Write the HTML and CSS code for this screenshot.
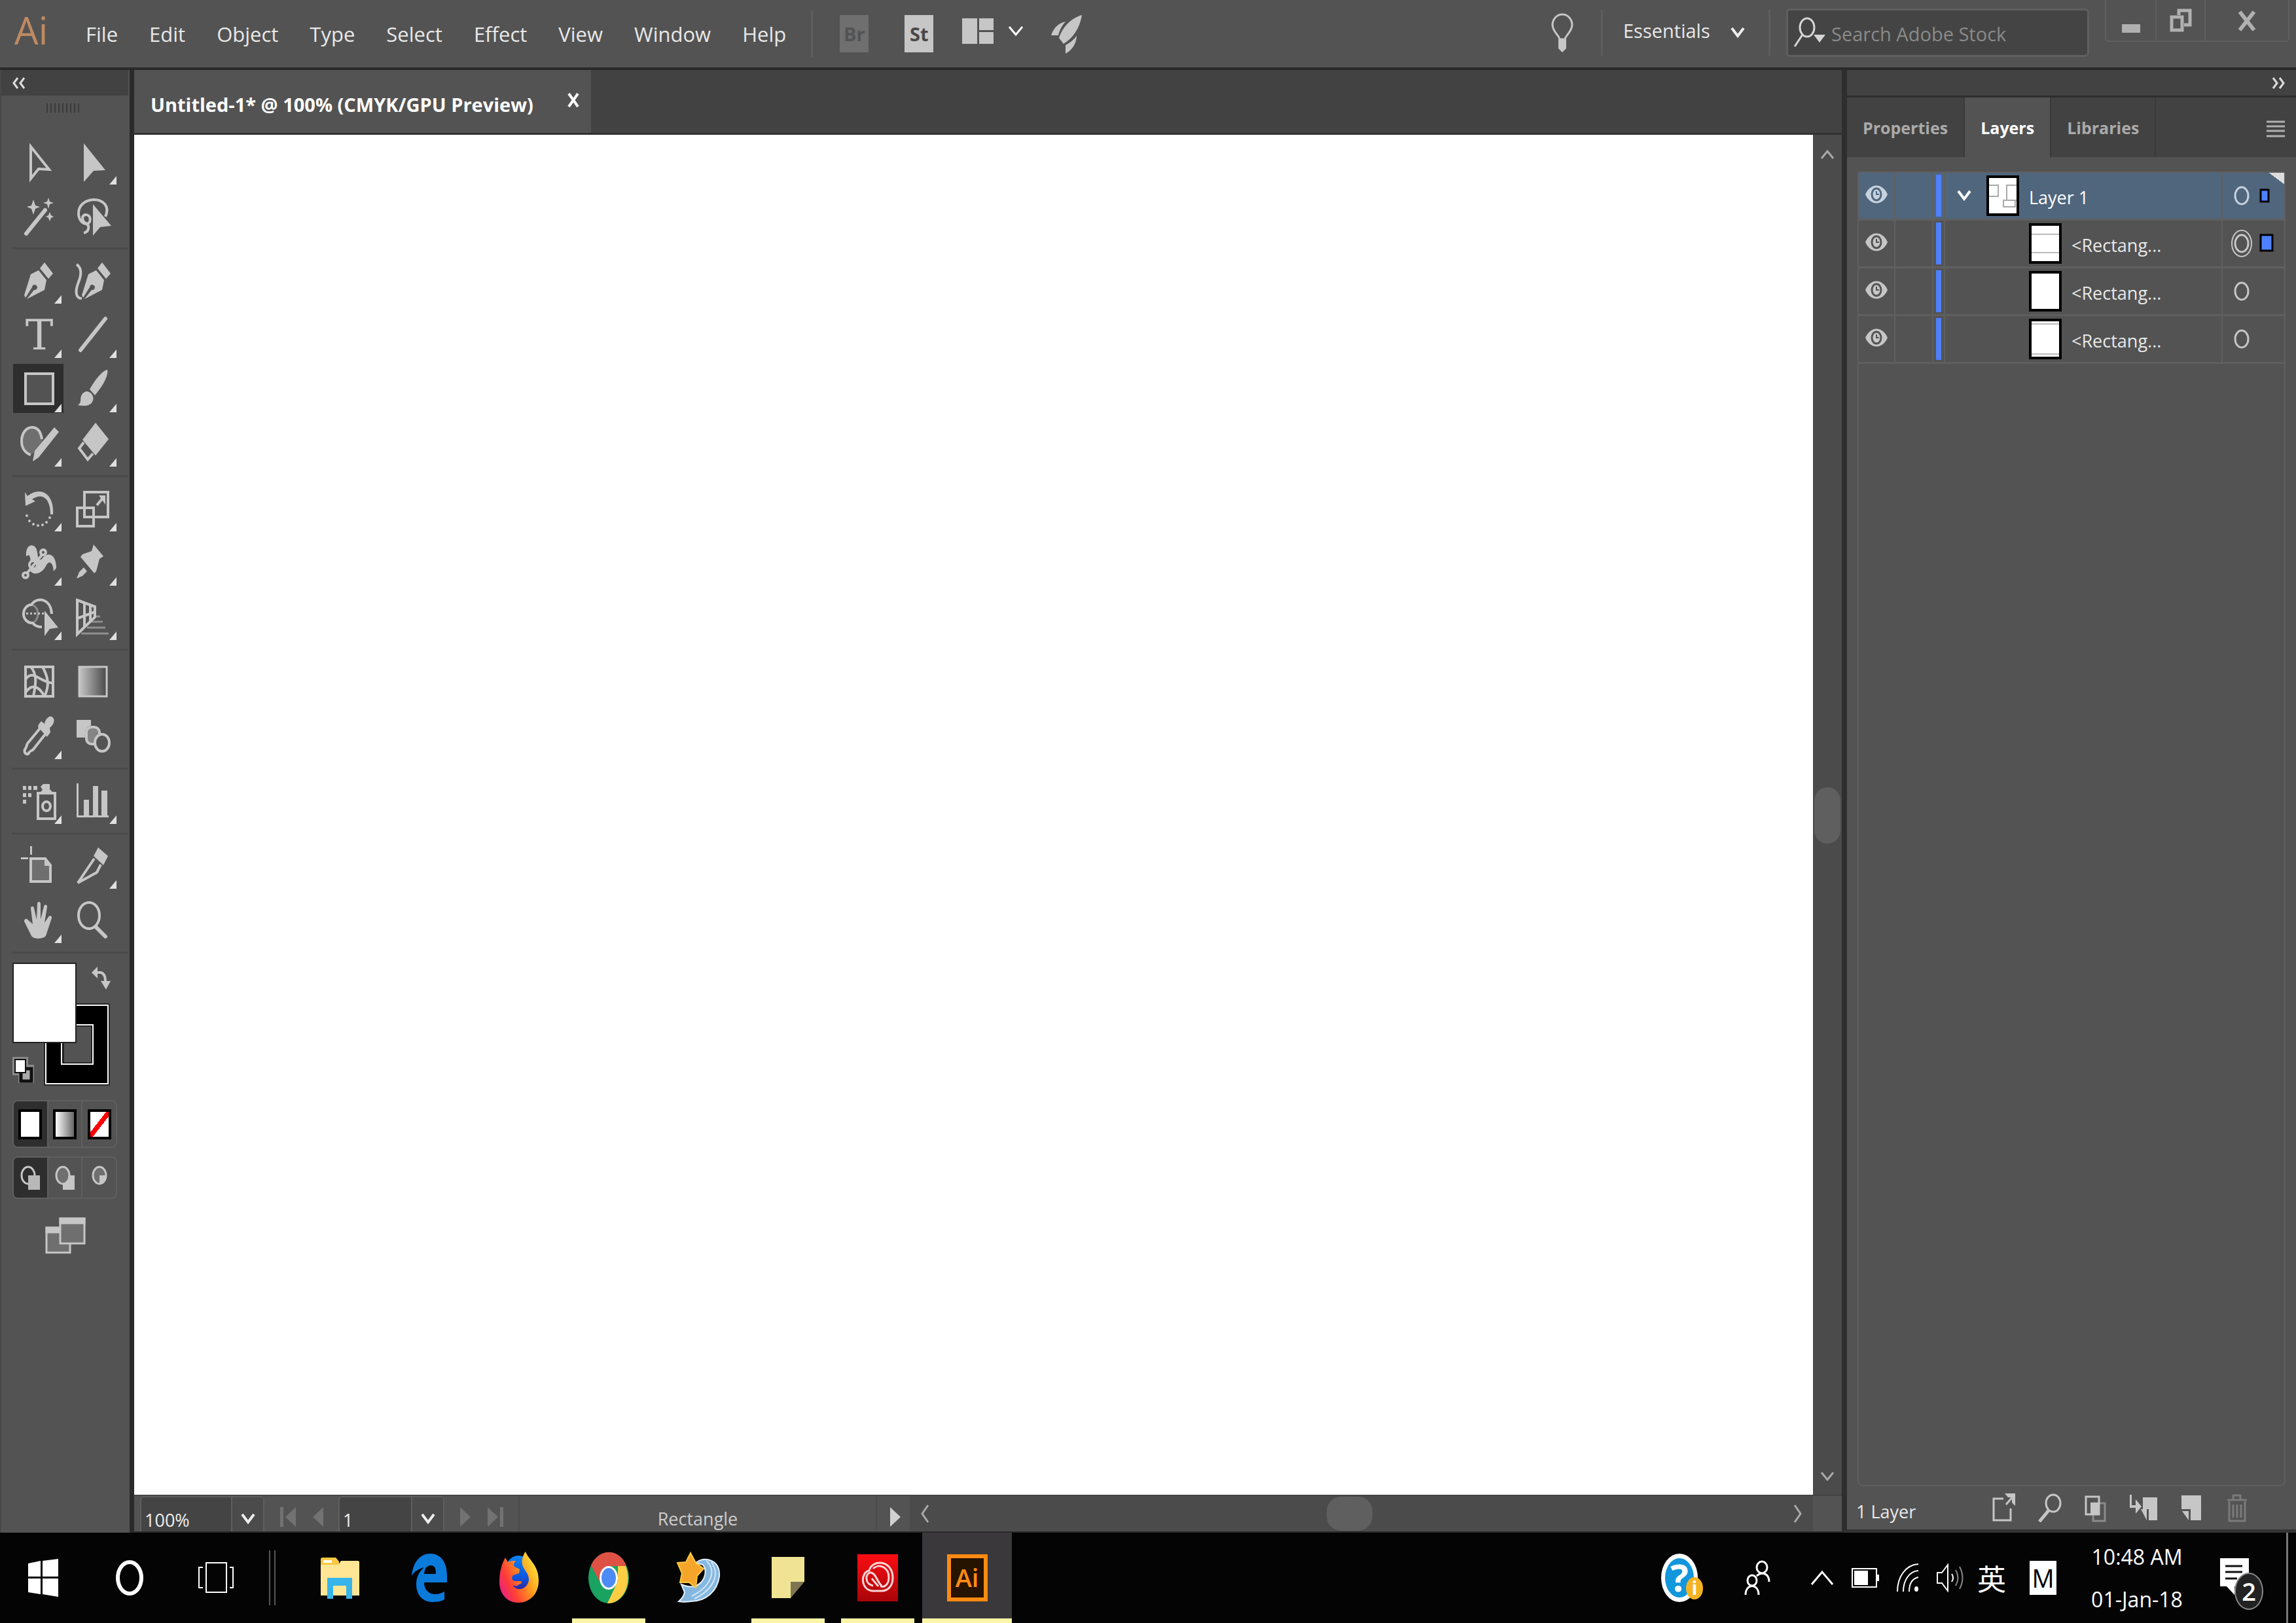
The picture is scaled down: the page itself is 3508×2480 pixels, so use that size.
FILE: index.html
```
<!DOCTYPE html>
<html lang="en">
<head>
    <meta charset="UTF-8">
    <meta name="viewport" content="width=device-width, initial-scale=1.0">
    <title>Untitled-1</title>
    <link rel="stylesheet" href="styles.css">
</head>
<body>
    <!-- Menu bar -->
    <header class="menubar">
        <span class="app-logo">Ai</span>
        <nav class="menus">
            <button>File</button>
            <button>Edit</button>
            <button>Object</button>
            <button>Type</button>
            <button>Select</button>
            <button>Effect</button>
            <button>View</button>
            <button>Window</button>
            <button>Help</button>
        </nav>
        <span class="divider"></span>
        <div class="app-links">
            <button class="app-tile dim">Br</button>
            <button class="app-tile">St</button>
            <button class="arrange" aria-label="Arrange documents">
                <svg width="94" height="40" viewBox="0 0 94 40"><path fill="#c6c6c6" d="M0 0h23v39H0zM26 0h22v18H26zM26 21h22v18H26z"/><path d="M72 13l10 12 10-12" fill="none" stroke="#fff" stroke-width="3"/></svg>
            </button>
            <button aria-label="GPU performance">
                <svg width="48" height="60" viewBox="0 0 48 60" fill="#c6c6c6"><path d="M47 1C32 5 18 18 12 36l7 9C34 36 44 20 47 1zM22 11C12 13 4 20 0 32h11c2-8 5-14 11-21zM39 32c-3 6-9 10-17 15v13c10-5 17-16 17-28z"/></svg>
            </button>
        </div>
        <div class="menubar-right">
            <button aria-label="Learn">
                <svg width="40" height="60" viewBox="0 0 40 60" fill="none" stroke="#c6c6c6" stroke-width="3"><path d="M16 40C15 34 5 28 5 18a15 16 0 0 1 30 0c0 10-10 16-11 22z"/><path fill="#c6c6c6" stroke="none" d="M14 40h12v14l-6 6-6-6z"/></svg>
            </button>
            <span class="divider"></span>
            <label class="workspace">
                <select aria-label="Workspace"><option>Essentials</option></select>
                <svg width="22" height="18" viewBox="0 0 22 18"><path d="M2 2l9 12 9-12" fill="none" stroke="#eee" stroke-width="4"/></svg>
            </label>
            <span class="divider"></span>
            <label class="search">
                <svg width="50" height="48" viewBox="0 0 50 48"><g fill="none" stroke="#d6d6d6" stroke-width="3"><ellipse cx="21" cy="16" rx="11" ry="14"/><path d="M14 27L2 45"/></g><path fill="#d6d6d6" d="M31 27h18l-9 12z"/></svg>
                <input type="text" placeholder="Search Adobe Stock" aria-label="Search Adobe Stock">
            </label>
            <div class="window-buttons">
                <button aria-label="Minimize"><svg width="30" height="40" viewBox="0 0 30 40"><path fill="#b0b0b0" d="M1 26h28v13H1z"/></svg></button>
                <button aria-label="Restore"><svg width="34" height="40" viewBox="0 0 34 40" fill="none" stroke="#b0b0b0" stroke-width="5"><path d="M14 12V5h17v22h-9"/><path d="M3 15h16v20H3z"/></svg></button>
                <button aria-label="Close"><svg width="30" height="40" viewBox="0 0 30 40"><path d="M4 7l22 28M26 7L4 35" stroke="#b0b0b0" stroke-width="6"/></svg></button>
            </div>
        </div>
    </header>

    <main class="workspace-area">
        <!-- Tools panel -->
        <aside class="tools">
            <div class="panel-header"><svg width="22" height="18" viewBox="0 0 22 18"><path d="M9 1L3 9l6 8M19 1l-6 8 6 8" fill="none" stroke="#ddd" stroke-width="3"/></svg></div>
            <div class="grip"></div>

            <div class="tool-group">
                <button class="tool" aria-label="Selection"><svg viewBox="0 0 84 83"><path class="line" d="M29 17v49l12-15 16 1z"/></svg></button>
                <button class="tool more" aria-label="Direct selection"><svg viewBox="0 0 84 83"><path d="M26 12v59l15-17 18-1z"/></svg></button>
                <button class="tool" aria-label="Magic wand"><svg viewBox="0 0 84 83"><path class="line thick" d="M22 67L51 31"/><path d="M33 15l3 9 7 2-7 3-3 9-3-9-7-3 7-2zM56 12l2 6 6 2-6 2-2 7-2-7-6-2 6-2zM58 34l2 5 4 2-4 2-2 5-2-5-4-2 4-2z"/></svg></button>
                <button class="tool" aria-label="Lasso"><svg viewBox="0 0 84 83"><path class="line" d="M59 41C67 23 53 15 41 15 26 16 18 25 18 36c0 9 6 17 13 16 7-2 6-14-2-14-7 1-6 10 0 13 7 4 5 13-3 15"/><path d="M40 22v48l11-13 17-2z"/></svg></button>
            </div>

            <div class="tool-group">
                <button class="tool more" aria-label="Pen"><svg viewBox="0 0 84 83"><path d="M19 62L29 30l12-6 12 15-3 15-27 14 11-14a4 4 0 1 0-3-4L21 66zM50 12l13 17-7 8-13-16z"/></svg></button>
                <button class="tool" aria-label="Curvature"><svg viewBox="0 0 84 83"><path d="M23 62L33 30l12-6 12 15-3 15-27 14 11-14a4 4 0 1 0-3-4L25 66zM54 12l13 17-7 8-13-16z"/><path class="line" d="M15 15c9 6 7 17 3 27-6 15-4 25 5 25"/></svg></button>
                <button class="tool more" aria-label="Type"><svg viewBox="0 0 84 83"><text class="type-glyph" x="42" y="62" text-anchor="middle">T</text></svg></button>
                <button class="tool more" aria-label="Line segment"><svg viewBox="0 0 84 83"><path class="line thick" d="M21 63l38-48"/></svg></button>
                <button class="tool more active" aria-label="Rectangle"><svg viewBox="0 0 84 83"><path class="line" fill="#535353" d="M21 16h42v46H21z"/></svg></button>
                <button class="tool more" aria-label="Paintbrush"><svg viewBox="0 0 84 83"><path d="M62 10c2 8-6 24-19 39l-8-9c9-16 20-29 27-30zM31 43c7 1 11 8 9 14-3 9-14 9-23 7 6-4 3-8 5-14 2-4 5-7 9-7z"/></svg></button>
                <button class="tool more" aria-label="Shaper"><svg viewBox="0 0 84 83"><ellipse cx="31" cy="36" rx="16" ry="19" fill="#6f6f6f"/><path class="line" d="M46 33C44 20 38 15 31 15c-9 0-16 9-16 21 0 10 5 18 14 21"/><path d="M32 67l3-16 30-36 7 7-31 39z"/></svg></button>
                <button class="tool more" aria-label="Eraser"><svg viewBox="0 0 84 83"><path d="M44 8l20 25-20 25-20-24z"/><path class="line" d="M26 38l-7 9 13 17 8-9"/></svg></button>
            </div>

            <div class="tool-group">
                <button class="tool more" aria-label="Rotate"><svg viewBox="0 0 84 83"><path d="M20 15l4 6C42 6 65 15 63 49h-4C59 24 46 15 31 26l5 3-15 7z"/><g><circle cx="23" cy="51" r="2"/><circle cx="27" cy="59" r="2"/><circle cx="33" cy="64" r="2"/><circle cx="40" cy="66" r="2"/><circle cx="47" cy="65" r="2"/><circle cx="53" cy="61" r="2"/><circle cx="58" cy="54" r="2"/></g></svg></button>
                <button class="tool more" aria-label="Scale"><svg viewBox="0 0 84 83"><path class="line" d="M27 15h36v38H27zM16 39h25v28H16zM46 35l9-11"/><path d="M49 20h10v14z"/></svg></button>
                <button class="tool more" aria-label="Width"><svg viewBox="0 0 84 83"><path d="M22 30c-2-20 15-22 17-6 1 8 2 14 7 10 8-12 22-8 22 14l-4 5c-1-14-7-18-12-8-6 12-19 15-24 7 0-8 2-20-2-24z"/><g class="line"><circle cx="33" cy="43" r="6" fill="#535353"/><path d="M24 55l22-27"/><circle cx="48" cy="24" r="4" fill="#535353"/><circle cx="21" cy="59" r="4" fill="#535353"/></g></svg></button>
                <button class="tool more" aria-label="Puppet warp"><svg viewBox="0 0 84 83"><path d="M41 12l15 18-6 4-5 19-3 3-21-25 3-4 14-5z"/><path d="M15 64l4-10 7-7 5 6-7 7z"/></svg></button>
                <button class="tool more" aria-label="Shape builder"><svg viewBox="0 0 84 83"><ellipse cx="29" cy="35" rx="11" ry="14" fill="none" stroke="#8a8a8a" stroke-width="3"/><path class="line" d="M46 55c-7 0-11-2-14-6-8 0-14-6-14-14s6-14 12-14c10-14 30-8 31 14"/><path d="M22 33h3v3h-3zM28 33h3v3h-3zM34 33h3v3h-3zM40 33h3v3h-3zM46 33h3v3h-3zM50 30v39l8-11 13-2z"/></svg></button>
                <button class="tool more" aria-label="Perspective grid"><svg viewBox="0 0 84 83"><path d="M44 39h7M37 47h18M31 56h28M22 65h42" stroke="#8f8f8f" stroke-width="3"/><path class="line" d="M16 14l27 10v16L16 66zM27 18v37M36 22v25M16 42l27-10"/></svg></button>
            </div>

            <div class="tool-group">
                <button class="tool" aria-label="Mesh"><svg viewBox="0 0 84 83"><path class="line" d="M21 17h42v45H21zM21 36c12-16 20 4 42 6M21 56c10-14 20-10 29 6M29 17c11 12 7 30 4 45M47 17c10 18 10 30 3 45"/></svg></button>
                <button class="tool" aria-label="Gradient"><svg viewBox="0 0 84 83"><defs><linearGradient id="fade"><stop offset="0" stop-color="#c6c6c6"/><stop offset="1" stop-color="#484848"/></linearGradient></defs><path d="M19 17h42v45H19z" fill="url(#fade)" stroke="#c6c6c6" stroke-width="3"/></svg></button>
                <button class="tool more" aria-label="Eyedropper"><svg viewBox="0 0 84 83"><path d="M41 22l4-5 5 4c2-8 6-12 11-11 6 3 4 12-3 17l1 7-5 7-14-15z"/><path class="line" d="M43 28L24 51c-2 4-1 6-4 9-2 6 3 9 6 6 1-4 4-3 7-6l18-23"/></svg></button>
                <button class="tool" aria-label="Blend"><svg viewBox="0 0 84 83"><path d="M15 15h22v9c-7 1-10 7-9 18H15z"/><rect class="line" x="30" y="26" width="20" height="26" rx="8" fill="#858585"/><ellipse class="line" cx="54" cy="50" rx="11" ry="13" fill="#535353"/></svg></button>
            </div>

            <div class="tool-group">
                <button class="tool more" aria-label="Symbol sprayer"><svg viewBox="0 0 84 83"><path d="M17 17h5v6h-5zM25 17h5v6h-5zM33 17h6v6h-6zM17 28h5v6h-5zM25 28h5v6h-5zM17 38h5v6h-5zM44 18l4-4h10v8l5 5H43l4-4z"/><path class="line" d="M40 28h26v39H40z"/><ellipse class="line" cx="53" cy="48" rx="6" ry="7"/></svg></button>
                <button class="tool more" aria-label="Column graph"><svg viewBox="0 0 84 83"><path d="M15 13h3v49h46v3H15zM26 38h8v25h-8zM40 17h8v46h-8zM53 24h9v39h-9z"/></svg></button>
            </div>

            <div class="tool-group">
                <button class="tool" aria-label="Artboard"><svg viewBox="0 0 84 83"><path class="line" fill="#6f6f6f" d="M29 29h22l8 10v25H29z"/><path d="M50 28l10 12H50zM28 10h3v13h-3zM14 27h11v3H14z"/></svg></button>
                <button class="tool more" aria-label="Slice"><svg viewBox="0 0 84 83"><path d="M48 12l15 13-7 14-15-14z"/><path class="line" d="M42 29L17 66l29-16 6-12"/></svg></button>
                <button class="tool more" aria-label="Hand"><svg viewBox="0 0 84 83"><path d="M30 64L19 42c0-4 3-5 5-3l8 7-3-24c0-4 5-4 5 0l4 17 1-24c0-4 5-4 5 0v24l5-20c1-4 6-3 5 1l-4 24 6-9c2-3 6-1 5 2L52 64c-4 5-18 6-22 0z"/></svg></button>
                <button class="tool" aria-label="Zoom"><svg viewBox="0 0 84 83"><ellipse class="line" cx="34" cy="33" rx="16" ry="20"/><path class="line thick" d="M44 50l15 15"/></svg></button>
            </div>

            <div class="swatches">
                <svg width="160" height="190" viewBox="0 0 160 190">
                    <path d="M51 65h95v120H51zM76 95v60h47V95z" fill="#000" fill-rule="evenodd" stroke="#111" stroke-width="5"/>
                    <path d="M51 65h95v120H51zM75 95v60h48V95z" fill="#000" fill-rule="evenodd" stroke="#fff" stroke-width="2"/>
                    <path d="M1 1h96v121H1z" fill="#fff" stroke="#222" stroke-width="2"/>
                    <path d="M129 15h6q7 2 7 13" fill="none" stroke="#c6c6c6" stroke-width="4"/>
                    <path fill="#c6c6c6" d="M121 15l9-9v18zM135 28h15l-7 13z"/>
                    <path d="M0 144h24v12h9v28H9v-12H0z" fill="#8a8a8a"/>
                    <path d="M13 162h16v19H13z" fill="#aaa" stroke="#111" stroke-width="5"/>
                    <path d="M4 148h16v20H4z" fill="#fff" stroke="#111" stroke-width="2"/>
                </svg>
            </div>

            <div class="switch tall">
                <button class="on" aria-label="Color"><span class="chip"></span></button>
                <button aria-label="Gradient fill"><span class="chip chip-gradient"></span></button>
                <button aria-label="None"><span class="chip chip-none"></span></button>
            </div>
            <div class="switch">
                <button class="on" aria-label="Draw normal"><svg width="30" height="38" viewBox="0 0 30 38"><ellipse cx="12" cy="15" rx="10" ry="13" fill="none" stroke="#c6c6c6" stroke-width="3"/><path fill="#b8b8b8" d="M12 15h18v22H12z"/></svg></button>
                <button aria-label="Draw behind"><svg width="30" height="38" viewBox="0 0 30 38"><path fill="#c6c6c6" d="M12 15h18v22H12z"/><ellipse cx="12" cy="15" rx="10" ry="13" fill="#6f6f6f" stroke="#c6c6c6" stroke-width="3"/></svg></button>
                <button aria-label="Draw inside"><svg width="30" height="38" viewBox="0 0 30 38"><ellipse cx="15" cy="15" rx="10" ry="13" fill="#6f6f6f" stroke="#c6c6c6" stroke-width="3"/><path fill="#c6c6c6" d="M15 15h11q-1 11-11 13z"/></svg></button>
            </div>
            <button class="screen-mode" aria-label="Change screen mode"><svg width="62" height="58" viewBox="0 0 62 58" stroke="#c6c6c6" stroke-width="3"><path fill="#6f6f6f" d="M2 17h36v38H2z"/><path fill="#c6c6c6" d="M2 17h20v7H2z"/><path fill="#6f6f6f" d="M23 3h37v38H23z"/><path fill="#c6c6c6" d="M23 3h37v7H23z"/></svg></button>
        </aside>

        <!-- Document window -->
        <section class="document">
            <div class="doc-tabs">
                <div class="doc-tab">
                    <span>Untitled-1* @ 100% (CMYK/GPU Preview)</span>
                    <button aria-label="Close tab"><svg width="18" height="22" viewBox="0 0 18 22"><path d="M2 1l14 20M16 1L2 21" stroke="#fff" stroke-width="4"/></svg></button>
                </div>
            </div>
            <div class="canvas-row">
                <div class="canvas"></div>
                <div class="scroll-v">
                    <svg width="22" height="16" viewBox="0 0 22 16"><path d="M2 14L11 3l9 11" fill="none" stroke="#aaa" stroke-width="3"/></svg>
                    <span class="thumb"></span>
                    <svg width="22" height="16" viewBox="0 0 22 16"><path d="M2 2l9 11 9-11" fill="none" stroke="#aaa" stroke-width="3"/></svg>
                </div>
            </div>
            <div class="status">
                <label class="combo zoom-level">
                    <select aria-label="Zoom level"><option>100%</option></select>
                    <span><svg width="22" height="18" viewBox="0 0 22 18"><path d="M2 2l9 12 9-12" fill="none" stroke="#eee" stroke-width="4"/></svg></span>
                </label>
                <div class="pager">
                    <button disabled aria-label="First artboard"><svg width="24" height="30" viewBox="0 0 24 30"><path d="M0 0h5v30H0zM24 0v30L8 15z"/></svg></button>
                    <button disabled aria-label="Previous artboard"><svg width="16" height="30" viewBox="0 0 16 30"><path d="M16 0v30L0 15z"/></svg></button>
                </div>
                <label class="combo page">
                    <select aria-label="Artboard"><option>1</option></select>
                    <span><svg width="22" height="18" viewBox="0 0 22 18"><path d="M2 2l9 12 9-12" fill="none" stroke="#eee" stroke-width="4"/></svg></span>
                </label>
                <div class="pager">
                    <button disabled aria-label="Next artboard"><svg width="16" height="30" viewBox="0 0 16 30"><path d="M0 0v30l16-15z"/></svg></button>
                    <button disabled aria-label="Last artboard"><svg width="24" height="30" viewBox="0 0 24 30"><path d="M24 0h-5v30h5zM0 0v30l16-15z"/></svg></button>
                </div>
                <span class="current-tool">Rectangle</span>
                <button class="status-menu" aria-label="Status options"><svg width="16" height="30" viewBox="0 0 16 30"><path fill="#d0d0d0" d="M0 0v30l16-15z"/></svg></button>
                <div class="scroll-h">
                    <svg width="14" height="30" viewBox="0 0 14 30"><path d="M12 2L3 15l9 13" fill="none" stroke="#aaa" stroke-width="3"/></svg>
                    <span class="thumb"></span>
                    <svg width="14" height="30" viewBox="0 0 14 30"><path d="M2 2l9 13-9 13" fill="none" stroke="#aaa" stroke-width="3"/></svg>
                </div>
                <span class="corner"></span>
            </div>
        </section>

        <!-- Layers panel -->
        <aside class="panels">
            <div class="panel-header right"><svg width="22" height="18" viewBox="0 0 22 18"><path d="M3 1l6 8-6 8M13 1l6 8-6 8" fill="none" stroke="#ddd" stroke-width="3"/></svg></div>
            <div class="panel-tabs">
                <button>Properties</button>
                <button class="current">Layers</button>
                <button>Libraries</button>
                <button class="panel-menu" aria-label="Panel menu"><svg width="28" height="28" viewBox="0 0 28 28"><path d="M0 3h28M0 10h28M0 17h28M0 25h28" stroke="#b0b0b0" stroke-width="3"/></svg></button>
            </div>
            <ul class="layers">
                <li class="layer selected">
                    <button class="eye" aria-label="Toggle visibility"><svg width="34" height="28" viewBox="0 0 34 28"><path fill="#c6d2de" d="M0 14C8-4 26-4 34 14 26 32 8 32 0 14z"/><ellipse cx="17" cy="14" rx="7" ry="9" fill="none" stroke="#50667d" stroke-width="3"/><path d="M17 9v5h4" fill="none" stroke="#50667d" stroke-width="2"/></svg></button>
                    <span class="lock"></span>
                    <span class="bar"></span>
                    <div class="layer-name">
                        <svg class="twist" width="22" height="18" viewBox="0 0 22 18"><path d="M2 2l9 12 9-12" fill="none" stroke="#fff" stroke-width="4"/></svg>
                        <svg width="50" height="62" viewBox="0 0 50 62"><path fill="#fff" stroke="#000" stroke-width="4" d="M2 2h46v58H2z"/><path fill="none" stroke="#aaa" stroke-width="2" d="M4 15h14v17H4M46 15H31v23h15M26 38h18v10H26z"/></svg>
                        <span>Layer 1</span>
                    </div>
                    <span class="target"><svg width="90" height="44" viewBox="-4 0 90 44"><ellipse cx="25" cy="22" rx="10" ry="13" fill="none" stroke="#c6d2de" stroke-width="3"/><path fill="#4f80ff" stroke="#000" stroke-width="3" d="M54 13h12v18H54z"/></svg></span>
                </li>
                <li class="layer child">
                    <button class="eye" aria-label="Toggle visibility"><svg width="34" height="28" viewBox="0 0 34 28"><path fill="#c6c6c6" d="M0 14C8-4 26-4 34 14 26 32 8 32 0 14z"/><ellipse cx="17" cy="14" rx="7" ry="9" fill="none" stroke="#535353" stroke-width="3"/><path d="M17 9v5h4" fill="none" stroke="#535353" stroke-width="2"/></svg></button>
                    <span class="lock"></span>
                    <span class="bar"></span>
                    <div class="layer-name">
                        <svg width="50" height="62" viewBox="0 0 50 62"><path fill="#fff" stroke="#000" stroke-width="4" d="M2 2h46v58H2z"/><path stroke="#bbb" stroke-width="2" d="M4 17h42M4 45h42"/></svg>
                        <span>&lt;Rectang...</span>
                    </div>
                    <span class="target"><svg width="90" height="44" viewBox="-4 0 90 44"><g fill="none" stroke="#c6c6c6" stroke-width="3"><ellipse cx="25" cy="22" rx="10" ry="13"/><ellipse cx="25" cy="22" rx="15" ry="20" stroke-width="2"/></g><path fill="#4f80ff" stroke="#000" stroke-width="3" d="M54 9h18v24H54z"/></svg></span>
                </li>
                <li class="layer child">
                    <button class="eye" aria-label="Toggle visibility"><svg width="34" height="28" viewBox="0 0 34 28"><path fill="#c6c6c6" d="M0 14C8-4 26-4 34 14 26 32 8 32 0 14z"/><ellipse cx="17" cy="14" rx="7" ry="9" fill="none" stroke="#535353" stroke-width="3"/><path d="M17 9v5h4" fill="none" stroke="#535353" stroke-width="2"/></svg></button>
                    <span class="lock"></span>
                    <span class="bar"></span>
                    <div class="layer-name">
                        <svg width="50" height="62" viewBox="0 0 50 62"><path fill="#fff" stroke="#000" stroke-width="4" d="M2 2h46v58H2z"/></svg>
                        <span>&lt;Rectang...</span>
                    </div>
                    <span class="target"><svg width="90" height="44" viewBox="-4 0 90 44"><ellipse cx="25" cy="22" rx="10" ry="13" fill="none" stroke="#c6c6c6" stroke-width="3"/></svg></span>
                </li>
                <li class="layer child">
                    <button class="eye" aria-label="Toggle visibility"><svg width="34" height="28" viewBox="0 0 34 28"><path fill="#c6c6c6" d="M0 14C8-4 26-4 34 14 26 32 8 32 0 14z"/><ellipse cx="17" cy="14" rx="7" ry="9" fill="none" stroke="#535353" stroke-width="3"/><path d="M17 9v5h4" fill="none" stroke="#535353" stroke-width="2"/></svg></button>
                    <span class="lock"></span>
                    <span class="bar"></span>
                    <div class="layer-name">
                        <svg width="50" height="62" viewBox="0 0 50 62"><path fill="#fff" stroke="#000" stroke-width="4" d="M2 2h46v58H2z"/><path stroke="#bbb" stroke-width="2" d="M4 8h42M4 54h42"/></svg>
                        <span>&lt;Rectang...</span>
                    </div>
                    <span class="target"><svg width="90" height="44" viewBox="-4 0 90 44"><ellipse cx="25" cy="22" rx="10" ry="13" fill="none" stroke="#c6c6c6" stroke-width="3"/></svg></span>
                </li>
            </ul>
            <div class="panel-footer">
                <span>1 Layer</span>
                <div class="footer-icons">
                    <button aria-label="Collect for export"><svg width="36" height="44" viewBox="0 0 36 44"><path d="M17 8H2v33h26V23M21 17L32 4" fill="none" stroke="#c6c6c6" stroke-width="3"/><path fill="#c6c6c6" d="M19 0h16v19l-5-5V6h-6z"/></svg></button>
                    <button aria-label="Locate object"><svg width="36" height="44" viewBox="0 0 36 44"><ellipse cx="23" cy="15" rx="11" ry="13" fill="none" stroke="#c6c6c6" stroke-width="3"/><path d="M16 26L2 43" stroke="#c6c6c6" stroke-width="5"/></svg></button>
                    <button aria-label="Clipping mask"><svg width="36" height="44" viewBox="0 0 36 44" fill="none" stroke-width="3"><path d="M14 15h18v27H14z" stroke="#8a8a8a"/><path d="M3 5h20v27H3z" stroke="#c6c6c6"/><path d="M10 14h13v18H10z" fill="#c6c6c6"/></svg></button>
                    <button aria-label="New sublayer"><svg width="42" height="44" viewBox="0 0 42 44" fill="#c6c6c6"><path d="M0 2h3v16h6v-9l9 11-9 11v-9H0zM20 6h22v35H29V24h-9zM17 24h9v17z"/></svg></button>
                    <button aria-label="New layer"><svg width="36" height="44" viewBox="0 0 36 44" fill="#c6c6c6"><path d="M3 3h30v38H17V24H3zM4 27h10v14z"/></svg></button>
                    <button aria-label="Delete"><svg width="36" height="44" viewBox="0 0 36 44" fill="none" stroke="#7b7b7b" stroke-width="3"><path d="M3 10h30M12 9V3h11v6M6 12v30h24V12M12 17v20M18 17v20M24 17v20"/></svg></button>
                </div>
            </div>
        </aside>
    </main>

    <!-- Windows taskbar -->
    <footer class="taskbar">
        <div class="task-start">
            <button aria-label="Start"><svg width="46" height="58" viewBox="0 0 46 58" fill="#fff"><path d="M0 7l19-4v24H0zM22 3l24-3v27H22zM0 30h19v24L0 51zM22 30h24v28l-24-4z"/></svg></button>
            <button aria-label="Cortana"><svg width="44" height="56" viewBox="0 0 44 56"><ellipse cx="22" cy="28" rx="18" ry="24" fill="none" stroke="#fff" stroke-width="6"/></svg></button>
            <button aria-label="Task view"><svg width="56" height="50" viewBox="0 0 56 50" fill="none" stroke="#fff" stroke-width="2"><path d="M13 2h31v45H13zM8 9H2v31h6M49 9h5v31h-5"/></svg></button>
        </div>
        <div class="task-apps">
            <button aria-label="File Explorer"><svg width="60" height="64" viewBox="0 0 60 64"><path fill="#f7c843" d="M1 4q0-3 3-3h20l5 6v8H1z"/><path fill="#ffe695" d="M1 12h27l4-6h26q2 0 2 3v50H1z"/><path fill="#fff" d="M5 5h13v4H5z"/><path fill="#37b5ea" d="M11 32h38v32h-9V44H20v20h-9z"/></svg></button>
            <button aria-label="Edge"><svg width="56" height="74" viewBox="0 0 56 74"><path fill="#0a7adb" d="M1 34C3 12 15 0 29 0c18 0 26 15 26 34v10H20c0 12 8 18 17 18 6 0 10-2 14-4v12c-5 3-12 4-18 4C17 74 8 62 8 47c0-12 5-20 12-26-8 2-15 6-19 13zm19-3h18c0-9-2-13-8-13-6 0-9 5-10 13z"/></svg></button>
            <button aria-label="Firefox"><svg width="62" height="80" viewBox="0 0 62 80"><defs><linearGradient id="fox" x1="0" y1=".8" x2="1" y2=".2"><stop offset="0" stop-color="#e5208a"/><stop offset=".25" stop-color="#ff3a3a"/><stop offset=".6" stop-color="#ff981c"/><stop offset="1" stop-color="#fff040"/></linearGradient><linearGradient id="globe" x2="0" y2="1"><stop offset="0" stop-color="#0d84f5"/><stop offset=".6" stop-color="#0b55dd"/><stop offset="1" stop-color="#3a1d8f"/></linearGradient></defs><ellipse cx="30" cy="34" rx="22" ry="28" fill="url(#globe)"/><path fill="url(#fox)" d="M10 9l4 7c4-2 8-2 12-2-3 4-4 6-2 9l8 4-1 6-9 3c-3 4-2 7 2 9h10c2 2 1 4-3 5-3 3-6 3-10 1 7 11 22 7 25-7 1-14-13-17-10-33 1-5 3-9 5-11 4 12 20 20 20 44 0 22-15 34-31 34C12 78 1 64 1 46 1 32 4 20 10 9z"/></svg></button>
            <button class="running" aria-label="Chrome"><svg width="62" height="80" viewBox="0 0 62 80"><ellipse cx="31" cy="40" rx="31" ry="39" fill="#1aa260"/><path fill="#de5246" d="M4 21C16-6 48-6 58 22H31L16 44z"/><path fill="#ffce44" d="M57 22C68 50 52 80 29 79l16-34V22z"/><ellipse cx="31" cy="40" rx="14" ry="18" fill="#fff"/><ellipse cx="31" cy="40" rx="11" ry="15" fill="#4c8bf5"/></svg></button>
            <button aria-label="Sky viewer"><svg width="68" height="80" viewBox="0 0 68 80"><path fill="#85b8e0" stroke="#e4f0fa" stroke-width="2" d="M30 17c6-5 12-6 18-5 14 3 19 12 18 26C63 60 46 76 22 76c-7 1-13 1-18 0 6-5 8-9 9-14l-5-12c14 6 24 4 31-4 6-8 8-18 2-26z"/><path d="M46 14c16 14 9 38-22 54M54 16c14 20 2 42-26 56" fill="none" stroke="#d4e6f6" stroke-width="2"/><path fill="#f6a52b" stroke="#fbc940" stroke-width="2" d="M22 2l8 15 12 9-10 11-2 18-10-8H6l3-14L2 17l13-1z"/></svg></button>
            <button class="running" aria-label="Sticky Notes"><svg width="52" height="64" viewBox="0 0 52 64"><path fill="#f0e494" d="M1 0h50v38H30v25H1z"/><path fill="#7d7650" d="M30 38h21L30 63z"/></svg></button>
            <button class="running" aria-label="Creative Cloud"><svg width="62" height="72" viewBox="0 0 62 72"><defs><linearGradient id="cc" x2="0" y2="1"><stop offset="0" stop-color="#fb0d12"/><stop offset="1" stop-color="#a80409"/></linearGradient></defs><path fill="url(#cc)" d="M0 0h62v72H0z"/><g fill="none" stroke="#fbd5d5" stroke-width="3"><path d="M23 56C4 54 5 27 18 25 22 7 54 8 54 36c0 13-8 20-17 20z"/><path d="M24 48C10 46 12 27 21 28c7 1 9 14 16 20M24 22c9-9 24-2 24 13 0 12-8 17-13 13M22 37l10 12"/></g></svg></button>
            <button class="running active"><span class="ai-icon">Ai</span></button>
        </div>
        <div class="tray">
            <button class="help" aria-label="Help">
                <svg width="66" height="74" viewBox="0 0 66 74"><ellipse cx="28" cy="37" rx="28" ry="37" fill="#fff"/><ellipse cx="28" cy="37" rx="22" ry="30" fill="#1296dc"/><text class="q" x="28" y="58" text-anchor="middle">?</text><ellipse cx="51" cy="53" rx="13" ry="17" fill="#f5b323"/><text class="i" x="51" y="63" text-anchor="middle">i</text></svg>
            </button>
            <button class="people" aria-label="People"><svg width="40" height="54" viewBox="0 0 40 54" fill="none" stroke="#fff" stroke-width="3"><ellipse cx="27" cy="11" rx="8" ry="9"/><ellipse cx="12" cy="31" rx="7" ry="8"/><path d="M2 53c0-18 20-18 20 0M19 24c8-7 19-4 19 9"/></svg></button>
            <button class="chevron-up" aria-label="Show hidden icons"><svg width="34" height="24" viewBox="0 0 34 24"><path d="M1 22L17 3l16 19" fill="none" stroke="#fff" stroke-width="3"/></svg></button>
            <svg width="42" height="32" viewBox="0 0 42 32"><path d="M1 2h37v28H1z" fill="none" stroke="#fff" stroke-width="2"/><path fill="#fff" d="M4 5h21v22H4zM39 11h3v10h-3z"/></svg>
            <svg width="34" height="44" viewBox="0 0 34 44" fill="none" stroke="#fff" stroke-width="2"><path d="M1 43C1 20 14 2 33 1M10 43C10 26 19 12 33 11M19 43c0-12 5-20 14-22"/><ellipse cx="30" cy="39" rx="3" ry="4" fill="#fff" stroke="none"/></svg>
            <svg width="42" height="44" viewBox="0 0 42 44" fill="none" stroke="#fff" stroke-width="2"><path d="M1 14h7L17 2v40L8 30H1z"/><path d="M23 16q4 6 0 12"/><path stroke="#888" d="M29 10q7 12 0 24M35 5q9 17 0 34"/></svg>
            <span class="ime" lang="zh">英</span>
            <span class="ime-mode">M</span>
            <div class="clock">
                <time>10:48 AM</time>
                <time>01-Jan-18</time>
            </div>
            <button class="notifications" aria-label="Notifications">
                <svg width="46" height="60" viewBox="0 0 46 60"><path fill="#fff" d="M0 0h44v43H22v13L10 43H0z"/><path d="M8 12h26M8 21h26M8 31h18" stroke="#111" stroke-width="3"/></svg>
                <span class="badge">2</span>
            </button>
        </div>
    </footer>
</body>
</html>
```

FILE: styles.css
```
* {
    box-sizing: border-box;
}

body {
    margin: 0;
    min-height: 100vh;
    display: flex;
    flex-direction: column;
    background: #535353;
    color: #e8e8e8;
    font-family: "Open Sans", "Noto Sans CJK SC", sans-serif;
    font-size: 27px;
}

button,
select,
input {
    margin: 0;
    padding: 0;
    border: 0;
    background: none;
    color: inherit;
    font: inherit;
}

select {
    appearance: none;
}

svg {
    display: block;
    flex: none;
}

/* Menu bar */
.menubar {
    display: flex;
    align-items: center;
    height: 107px;
    padding: 0 10px 0 22px;
    border-bottom: 4px solid #292929;
}

.app-logo {
    width: 109px;
    margin-bottom: 12px;
    color: #bf8a62;
    font-size: 58px;
    line-height: 80px;
}

.menus {
    display: flex;
    gap: 48px;
    margin-right: 38px;
    font-size: 31px;
    line-height: 60px;
}

.divider {
    width: 3px;
    height: 70px;
    background: #5e5e5e;
}

.app-links {
    display: flex;
    align-items: center;
    margin-left: 41px;
}

.app-tile {
    width: 44px;
    height: 57px;
    margin-right: 55px;
    background: #c6c6c6;
    color: #484848;
    font-size: 29px;
    font-weight: bold;
}

.arrange {
    margin: 0 42px 8px -11px;
}

.app-tile.dim {
    background: #6f6f6f;
    color: #535353;
}

.menubar-right {
    display: flex;
    align-items: center;
    align-self: flex-start;
    height: 103px;
    padding-bottom: 4px;
    margin-left: auto;
}

.menubar-right > button {
    margin-right: 39px;
}

.workspace {
    display: flex;
    align-items: center;
    gap: 18px;
    margin: 0 36px 0 31px;
    font-size: 29px;
}

.workspace select {
    width: 146px;
    padding-bottom: 6px;
}

.search {
    display: flex;
    align-items: center;
    gap: 8px;
    width: 463px;
    height: 74px;
    margin: 0 24px;
    padding-left: 8px;
    border: 3px solid #5f5f5f;
    border-radius: 6px;
    background: #444;
    font-size: 29px;
}

.search input {
    flex: 1;
    min-width: 0;
    padding-top: 4px;
}

.search input::placeholder {
    color: #8a8a8a;
}

.window-buttons {
    display: flex;
    align-self: flex-start;
    height: 64px;
    border: 2px solid #5f5f5f;
    border-top: 0;
    border-radius: 0 0 6px 6px;
}

.window-buttons button {
    display: grid;
    place-items: center;
    width: 75px;
}

.window-buttons button + button {
    border-left: 2px solid #5f5f5f;
}

.window-buttons button:last-child {
    width: 128px;
}

/* Main area */
.workspace-area {
    flex: 1;
    display: grid;
    grid-template-columns: 205px 1fr 694px;
}

.panel-header {
    display: flex;
    align-items: center;
    height: 39px;
    padding: 0 16px;
    background: #424242;
}

.panel-header.right {
    justify-content: flex-end;
}

.tools {
    border-right: 7px solid #2a2a2a;
    border-left: 2px solid #484848;
    padding-right: 2px;
}

.grip {
    width: 52px;
    height: 14px;
    margin: 12px auto 35px 69px;
    background: repeating-linear-gradient(90deg, #3a3a3a 0 2px, #535353 2px 6px);
}

.tool-group {
    display: grid;
    grid-template-columns: 84px 84px;
    margin-left: 16px;
    padding-bottom: 5px;
    border-bottom: 3px solid #4a4a4a;
    margin-bottom: 8px;
}

.tool {
    position: relative;
    height: 83px;
    border-radius: 6px;
}

.tool svg {
    width: 84px;
    height: 83px;
    fill: #c6c6c6;
}

.tool .line {
    stroke: #c6c6c6;
    stroke-width: 4px;
}

.tool .line:not([fill]) {
    fill: none;
}

.tool .thick {
    stroke-width: 6px;
    stroke-linecap: round;
}

.type-glyph {
    font-family: "DejaVu Serif", serif;
    font-size: 64px;
}

.more::after {
    content: "";
    position: absolute;
    right: 8px;
    bottom: 8px;
    border-bottom: 13px solid #e0e0e0;
    border-left: 11px solid transparent;
}

.active.tool {
    background: linear-gradient(#2e2e2e, #2e2e2e) 2px 1px / 77px 75px no-repeat;
}

.swatches {
    margin: 14px 0 20px 17px;
}

.switch {
    display: flex;
    width: 160px;
    height: 65px;
    margin: 0 0 13px 17px;
    border: 2px solid #5f5f5f;
    border-radius: 8px;
    overflow: hidden;
}

.switch.tall {
    height: 73px;
}

.switch button {
    flex: 1;
    display: grid;
    place-items: center;
}

.switch button + button {
    border-left: 2px solid #5f5f5f;
}

.switch .on {
    background: #2e2e2e;
}

.chip {
    width: 36px;
    height: 46px;
    border: 4px solid #000;
    background: #fff;
}

.chip-gradient {
    background: linear-gradient(90deg, #fff, #666);
}

.chip-none {
    background: linear-gradient(128deg, #fff 42%, #f00 42% 58%, #fff 58%);
}

.screen-mode {
    margin: 14px 0 0 67px;
}

/* Document */
.document {
    display: flex;
    flex-direction: column;
    min-width: 0;
    border-bottom: 2px solid #2a2a2a;
}

.doc-tabs {
    display: flex;
    height: 99px;
    background: #424242;
    border-bottom: 3px solid #333;
}

.doc-tab {
    display: flex;
    align-items: center;
    justify-content: space-between;
    width: 698px;
    padding: 8px 18px 0 25px;
    background: #535353;
    color: #fff;
    font-size: 29px;
    font-weight: bold;
    white-space: nowrap;
}

.doc-tab button {
    margin-bottom: 12px;
}

.canvas-row {
    flex: 1;
    display: flex;
}

.canvas {
    flex: 1;
    background: #fff;
}

.scroll-v {
    display: flex;
    flex-direction: column;
    align-items: center;
    justify-content: space-between;
    width: 44px;
    padding: 22px 0 20px;
    background: #4b4b4b;
}

.thumb {
    border-radius: 22px;
    background: #5f5f5f;
}

.scroll-v .thumb {
    width: 40px;
    height: 86px;
}

.status {
    display: flex;
    height: 56px;
    padding-left: 9px;
    border-top: 2px solid #444;
    background: #535353;
    color: #eee;
}

.combo {
    display: flex;
    border: 2px solid #5f5f5f;
    border-bottom: 0;
    border-radius: 6px 6px 0 0;
    background: #444;
}

.combo select {
    flex: 1;
    min-width: 0;
    padding: 16px 0 0 5px;
}

.combo span {
    display: grid;
    place-items: center;
    width: 49px;
    padding-top: 14px;
    border-left: 2px solid #5f5f5f;
    background: #4b4b4b;
}

.zoom-level {
    width: 190px;
}

.page {
    width: 162px;
}

.pager {
    display: flex;
    align-items: center;
    justify-content: center;
    gap: 26px;
    width: 113px;
    padding-top: 10px;
    fill: #727272;
}

.current-tool {
    width: 548px;
    padding-top: 16px;
    border: 2px solid #4b4b4b;
    border-width: 0 2px;
    color: #ccc;
    text-align: center;
}

.status-menu {
    width: 50px;
    padding: 10px 0 0 20px;
}

.scroll-h {
    flex: 1;
    display: flex;
    align-items: center;
    justify-content: space-between;
    padding: 0 16px;
    background: #4b4b4b;
}

.scroll-h .thumb {
    width: 70px;
    height: 52px;
    margin-right: 36px;
}

.corner {
    width: 44px;
}

/* Layers panel */
.panels {
    display: flex;
    flex-direction: column;
    border-left: 8px solid #2e2e2e;
    border-bottom: 5px solid #333;
}

.panel-tabs {
    display: flex;
    height: 94px;
    border-top: 3px solid #2e2e2e;
    background: #424242;
    color: #aaa;
    font-size: 25px;
    font-weight: bold;
}

.panel-tabs button {
    padding: 0 24px;
    border-right: 2px solid #3a3a3a;
}

.panel-tabs .current {
    background: #535353;
    color: #fff;
}

.panel-tabs .panel-menu {
    margin-left: auto;
    padding: 4px 17px 0;
    border: 0;
}

.layers {
    flex: 1;
    margin: 22px 16px 0;
    padding: 0;
    border: 2px solid #5f5f5f;
    border-radius: 4px 4px 8px 8px;
    list-style: none;
}

.layer {
    display: grid;
    grid-template-columns: 56px 58px 18px 1fr 94px;
    height: 73px;
    border-bottom: 3px solid #5f5f5f;
}

.layer > * {
    border-right: 2px solid #5f5f5f;
}

.layer > .target {
    border-right: 0;
}

.selected {
    background: linear-gradient(217deg, #ddd 14px, #50667d 14px);
    color: #fff;
}

.eye {
    display: grid;
    place-items: center;
    padding-bottom: 4px;
}

.bar {
    padding: 3px 4px;
    background: #4f80ff content-box;
}

.layer-name {
    display: flex;
    align-items: center;
    gap: 15px;
    padding-left: 18px;
}

.layer-name span {
    padding-top: 4px;
}

.twist {
    margin-right: 8px;
}

.child .layer-name {
    padding-left: 128px;
}

.target {
    display: flex;
    align-items: center;
}

.panel-footer {
    display: flex;
    align-items: center;
    justify-content: space-between;
    height: 66px;
    padding: 0 72px 0 14px;
}

.panel-footer > span {
    padding-top: 10px;
}

.footer-icons {
    display: flex;
    gap: 34px;
}

/* Taskbar */
.taskbar {
    display: flex;
    height: 138px;
    background: #040405;
    color: #fff;
}

.task-start {
    display: flex;
    align-items: center;
    width: 421px;
    margin: 0 29px 0 0;
    background: linear-gradient(90deg, #555 2px, transparent 2px 8px, #555 8px) right / 10px 84px no-repeat;
}

.task-start button,
.task-apps button {
    display: grid;
    place-items: center;
    width: 132px;
}

.task-apps {
    display: flex;
}

.task-apps button {
    width: 137px;
    border-bottom: 7px solid transparent;
    padding-top: 7px;
}

.task-apps .running {
    background: linear-gradient(#fbf5a8, #fbf5a8) bottom / 112px 7px no-repeat border-box;
}

.task-apps .active {
    background: #3a383b;
    border-bottom-color: #fbf5a8;
}

.ai-icon {
    width: 62px;
    height: 72px;
    border: 6px solid #ff8a12;
    background: #261300;
    color: #ff8a12;
    font-size: 38px;
    font-weight: 600;
    line-height: 58px;
}

.tray {
    display: flex;
    align-items: center;
    margin-left: auto;
    margin-right: 12px;
    border-right: 3px solid #777;
}

.help {
    margin-right: 61px;
}

.help text {
    fill: #fff;
    font-size: 58px;
    font-weight: bold;
}

.help .i {
    font-size: 29px;
}

.people {
    margin-right: 62px;
}

.chevron-up {
    margin-right: 28px;
}

.tray > svg {
    margin-right: 27px;
}

.ime {
    margin: 0 36px 0 -7px;
    font-family: "Noto Sans CJK SC", sans-serif;
    font-size: 44px;
}

.ime-mode {
    width: 41px;
    background: #fff;
    color: #000;
    font-size: 38px;
    line-height: 52px;
    text-align: center;
}

.clock {
    width: 146px;
    margin: 0 54px 0 50px;
    font-size: 32px;
    line-height: 65px;
    text-align: center;
    white-space: nowrap;
}

.clock time {
    display: block;
}

.notifications {
    position: relative;
    margin-right: 55px;
}

.badge {
    position: absolute;
    left: 22px;
    top: 22px;
    width: 44px;
    height: 57px;
    border: 2px solid #888;
    border-radius: 50%;
    background: #222;
    font-size: 38px;
    font-weight: 600;
    line-height: 52px;
}
```
